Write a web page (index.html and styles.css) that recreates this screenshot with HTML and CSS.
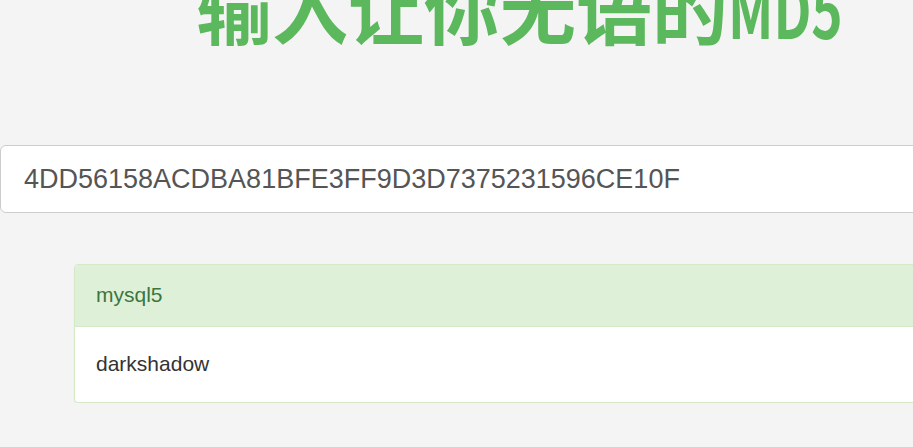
FILE: index.html
```html
<!DOCTYPE html>
<html lang="zh-CN">
<head>
  <meta charset="UTF-8" />
  <meta name="viewport" content="width=device-width, initial-scale=1.0" />
  <title>输入让你无语的MD5</title>
  <link rel="stylesheet" href="styles.css">
</head>
<body>

  <div class="page">
    <h1 class="title">输入让你无语的<span class="title-latin">MD5</span></h1>

    <input class="hash-input" type="text" value="4DD56158ACDBA81BFE3FF9D3D7375231596CE10F" />

    <div class="result">
      <div class="result-head">mysql5</div>
      <div class="result-body">darkshadow</div>
    </div>
  </div>

</body>
</html>
```

FILE: styles.css
```css
body {
  margin: 0;
  padding: 0;
  background: #f4f4f4;
  font-family: 'Liberation Sans', Arial, sans-serif;
  overflow: hidden;
}

.page {
  width: 1042px;
}

.title {
  margin: -32px 0 101px;
  height: 76px;
  line-height: 76px;
  text-align: center;
  font-family: 'Noto Sans CJK SC', sans-serif;
  font-size: 76px;
  font-weight: 700;
  color: #5cb85c;
  white-space: nowrap;
}

.title-latin {
  display: inline-block;
  transform: scaleX(0.7);
  transform-origin: left center;
  margin-right: -46px;
}

.hash-input {
  display: block;
  box-sizing: border-box;
  width: 100%;
  height: 68px;
  margin: 0 0 51px;
  padding: 0 23px;
  background: #fff;
  border: 1px solid #ccc;
  border-radius: 6px;
  font-family: 'Liberation Sans', Arial, sans-serif;
  font-size: 27px;
  color: #555;
  outline: none;
}

.result {
  margin-left: 74px;
  background: #fff;
  border: 1px solid #d6e9c6;
  border-radius: 4px;
  box-shadow: 0 1px 2px rgba(0, 0, 0, 0.05);
  overflow: hidden;
}

.result-head {
  padding: 18px 21px 19px;
  background: #dff0d8;
  border-bottom: 1px solid #d6e9c6;
  color: #3c763d;
  font-size: 21px;
}

.result-body {
  padding: 25px 21px 26px;
  color: #333;
  font-size: 21px;
}
```
